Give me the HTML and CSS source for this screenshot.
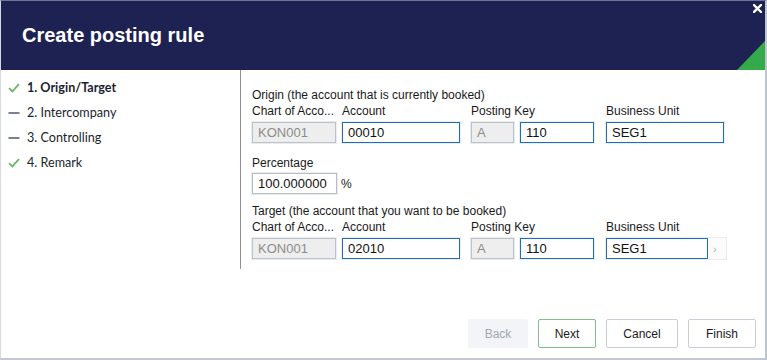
FILE: index.html
```html
<!DOCTYPE html>
<html>
<head>
<meta charset="utf-8">
<link rel="stylesheet" href="styles.css">
</head>
<body>
<div class="dialog">
  <header class="header">
    <h1 class="title">Create posting rule</h1>
    <svg class="close" width="9" height="9" viewBox="0 0 9 9"><path d="M1 1 L8 8 M8 1 L1 8" stroke="#fff" stroke-width="2.4" stroke-linecap="square"/></svg>
    <div class="corner"></div>
  </header>
  <div class="main">
    <nav class="nav">
      <div class="step step-active">
        <svg class="ic" width="12" height="10" viewBox="0 0 12 10"><path d="M1 5.2 L4.3 8.4 L11 1.2" fill="none" stroke="#6cb86a" stroke-width="1.8"/></svg>
        <span>1. Origin/Target</span>
      </div>
      <div class="step">
        <svg class="ic" width="12" height="10" viewBox="0 0 12 10"><path d="M0.5 5 H11.5" stroke="#5b6275" stroke-width="1.6"/></svg>
        <span>2. Intercompany</span>
      </div>
      <div class="step">
        <svg class="ic" width="12" height="10" viewBox="0 0 12 10"><path d="M0.5 5 H11.5" stroke="#5b6275" stroke-width="1.6"/></svg>
        <span>3. Controlling</span>
      </div>
      <div class="step">
        <svg class="ic" width="12" height="10" viewBox="0 0 12 10"><path d="M1 5.2 L4.3 8.4 L11 1.2" fill="none" stroke="#6cb86a" stroke-width="1.8"/></svg>
        <span>4. Remark</span>
      </div>
    </nav>
    <section class="content">
      <div class="sect-title">Origin (the account that is currently booked)</div>
      <div class="row">
        <div class="field f-chart">
          <div class="lbl">Chart of Acco...</div>
          <div class="inp dis">KON001</div>
        </div>
        <div class="field f-acc">
          <div class="lbl">Account</div>
          <div class="inp act">00010</div>
        </div>
        <div class="field f-key">
          <div class="lbl">Posting Key</div>
          <div class="pair">
            <div class="inp dis w-a">A</div>
            <div class="inp act w-k">110</div>
          </div>
        </div>
        <div class="field f-bu">
          <div class="lbl">Business Unit</div>
          <div class="bu-wrap"><div class="inp act w-bu">SEG1</div></div>
        </div>
      </div>
      <div class="pct-block">
        <div class="lbl">Percentage</div>
        <div class="pct-row">
          <div class="inp plain w-pct">100.000000</div>
          <span class="pct-sign">%</span>
        </div>
      </div>
      <div class="sect-title sect-target">Target (the account that you want to be booked)</div>
      <div class="row">
        <div class="field f-chart">
          <div class="lbl">Chart of Acco...</div>
          <div class="inp dis">KON001</div>
        </div>
        <div class="field f-acc">
          <div class="lbl">Account</div>
          <div class="inp act">02010</div>
        </div>
        <div class="field f-key">
          <div class="lbl">Posting Key</div>
          <div class="pair">
            <div class="inp dis w-a">A</div>
            <div class="inp act w-k">110</div>
          </div>
        </div>
        <div class="field f-bu">
          <div class="lbl">Business Unit</div>
          <div class="bu-wrap bu-scroll"><div class="inp act w-bu2">SEG1</div><span class="arrow">›</span></div>
        </div>
      </div>
    </section>
  </div>
  <footer class="footer">
    <button class="btn btn-back">Back</button>
    <button class="btn btn-next">Next</button>
    <button class="btn">Cancel</button>
    <button class="btn">Finish</button>
  </footer>
</div>
</body>
</html>
```
FILE: styles.css
```css
* { box-sizing: border-box; }
html, body { margin: 0; padding: 0; }
body {
  width: 767px;
  height: 360px;
  background: #ffffff;
  font-family: "Liberation Sans", Arial, sans-serif;
  overflow: hidden;
}
.dialog {
  width: 767px;
  height: 360px;
  border-top: 1px solid #6e7491;
  border-left: 1px solid #d3dae3;
  border-right: 2px solid #bfc5ce;
  border-bottom: 2px solid #c3c8d0;
  display: flex;
  flex-direction: column;
  background: #fff;
}
.header {
  position: relative;
  height: 69px;
  flex: none;
  background: #1e2252;
  display: flex;
  align-items: center;
  padding-left: 21px;
}
.title {
  margin: 0;
  color: #ffffff;
  font-size: 20px;
  font-weight: bold;
  line-height: 23px;
  font-family: "Liberation Sans", Arial, sans-serif;
}
.close {
  position: absolute;
  right: 3px;
  top: 3px;
}
.corner {
  position: absolute;
  right: 0;
  bottom: 0;
  width: 28px;
  height: 29px;
  background: #34aa4b;
  clip-path: polygon(100% 0, 100% 100%, 0 100%);
}
.main {
  display: flex;
  align-items: flex-start;
  flex: none;
}
.nav {
  width: 240px;
  flex: none;
  align-self: stretch;
  border-right: 1px solid #8f8f8f;
  padding-top: 5px;
  padding-left: 7px;
}
.step {
  height: 25px;
  display: flex;
  align-items: center;
  gap: 7px;
  font-family: Lato, "Liberation Sans", sans-serif;
  font-size: 12.6px;
  color: #1c1f2e;
}
.step-active { font-weight: bold; }
.ic { flex: none; }
.content {
  padding: 17px 0 10px 11px;
  font-size: 12px;
  color: #1a1a1a;
}
.sect-title {
  line-height: 16px;
  height: 16px;
}
.sect-target { margin-top: 9px; }
.row {
  display: flex;
}
.field {
  display: flex;
  flex-direction: column;
}
.lbl {
  line-height: 16px;
  height: 16px;
  margin-bottom: 3px;
  white-space: nowrap;
}
.inp {
  height: 21px;
  line-height: 19px;
  padding-left: 5px;
  font-size: 13px;
  border: 1px solid #b8c2cc;
  background: #fff;
  color: #111;
  box-shadow: 0 0 0 1px #ececec;
  white-space: nowrap;
}
.dis {
  background: #eeeeee;
  color: #8c8c8c;
  border-color: #bac3cc;
}
.act {
  border-color: #1d6fb8;
}
.plain {
  border-color: #b5bec8;
}
.f-chart { width: 90px; }
.f-chart .inp { width: 84px; }
.f-acc { width: 129px; }
.f-acc .inp { width: 118px; }
.f-key { width: 135px; }
.pair { display: flex; gap: 6px; }
.w-a { width: 43px; }
.w-k { width: 74px; }
.f-bu { width: 122px; }
.w-bu { width: 118px; }
.bu-wrap { display: flex; align-items: center; }
.bu-scroll {
  width: 120px;
  box-shadow: 0 0 0 1px #ececec;
  background: #fbfbfb;
}
.w-bu2 { width: 102px; box-shadow: none; }
.arrow {
  color: #b0b0b0;
  font-size: 11px;
  margin-left: 5px;
}
.pct-block { margin-top: 12px; }
.pct-block .lbl { margin-bottom: 2px; }
.pct-row { display: flex; align-items: center; }
.w-pct { width: 85px; }
.pct-sign { margin-left: 4px; font-size: 12px; }
.footer {
  flex: 1;
  display: flex;
  justify-content: flex-end;
  align-items: flex-end;
  gap: 10px;
  padding: 0 9px 10px 0;
}
.btn {
  height: 29px;
  font-family: "Liberation Sans", Arial, sans-serif;
  font-size: 12px;
  color: #1a1a1a;
  background: #fff;
  border: 1px solid #c9ced6;
  border-radius: 2px;
  padding: 0;
}
.btn:nth-child(3) { width: 72px; }
.btn:nth-child(4) { width: 68px; }
.btn-back {
  width: 60px;
  background: #f2f4f7;
  border-color: #f2f4f7;
  color: #a2a7ae;
}
.btn-next {
  width: 58px;
  border-color: #7fbf89;
}
```
